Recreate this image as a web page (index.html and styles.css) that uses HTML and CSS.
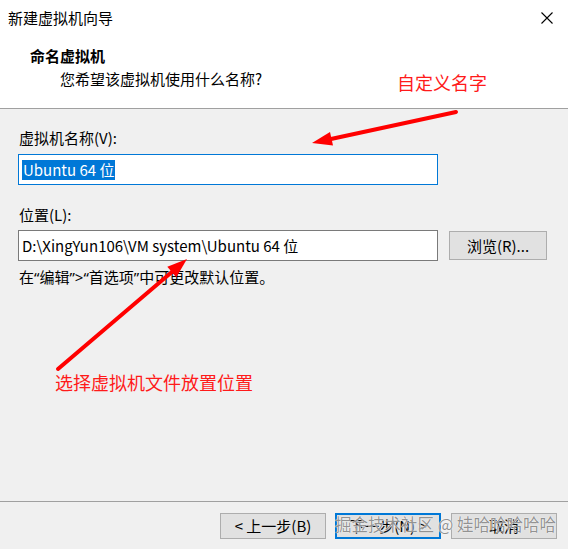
FILE: index.html
```html
<!DOCTYPE html>
<html lang="zh-CN">
<head>
<meta charset="utf-8">
<link rel="stylesheet" href="styles.css">
</head>
<body>
<div class="win">
  <header class="head">
    <div class="titlebar">
      <span class="title">新建虚拟机向导</span>
      <svg class="close" width="12" height="12" viewBox="0 0 12 12"><path d="M0.5 0.5 L11.5 11.5 M11.5 0.5 L0.5 11.5" stroke="#000" stroke-width="1.1" fill="none"/></svg>
    </div>
    <div class="heading">命名虚拟机</div>
    <div class="sub">您希望该虚拟机使用什么名称?</div>
  </header>
  <main class="body">
    <div class="lbl">虚拟机名称(V):</div>
    <div class="field focus"><span class="sel">Ubuntu 64 位</span></div>
    <div class="lbl lbl2">位置(L):</div>
    <div class="row">
      <div class="field">D:\XingYun106\VM system\Ubuntu 64 位</div>
      <button class="btn browse">浏览(R)...</button>
    </div>
    <p class="hint">在<span class="q">“</span>编辑<span class="q">”&gt;“</span>首选项<span class="q">”</span>中可更改默认位置。</p>
  </main>
  <footer class="foot">
    <button class="btn fbtn">&lt; 上一步(B)</button>
    <button class="btn fbtn primary">下一步(N) &gt;</button>
    <button class="btn fbtn cancel">取消</button>
  </footer>
  <svg class="arrows" width="568" height="549" viewBox="0 0 568 549">
    <line x1="456" y1="112" x2="331" y2="139" stroke="#ff0000" stroke-width="4" stroke-linecap="round"/>
    <polygon points="312,143 333,145.6 330,132" fill="#ff0000"/>
    <line x1="58" y1="369" x2="173" y2="271" stroke="#ff0000" stroke-width="4" stroke-linecap="round"/>
    <polygon points="187,259 176.3,277.3 167.3,266.7" fill="#ff0000"/>
  </svg>
  <span class="note note1">自定义名字</span>
  <span class="note note2">选择虚拟机文件放置位置</span>
  <span class="wm">掘金技术社区 @ 娃哈哈哈哈哈</span>
</div>
</body>
</html>
```

FILE: styles.css
```css
* { box-sizing: border-box; }
html, body { margin: 0; padding: 0; }
body {
  width: 568px;
  height: 549px;
  overflow: hidden;
  background: #f0f0f0;
  font-family: "Noto Sans CJK SC", "Noto Sans", sans-serif;
  font-size: 15px;
  color: #000;
}
.win {
  position: relative;
  width: 568px;
  height: 549px;
  display: flex;
  flex-direction: column;
}
.head {
  background: #fff;
  height: 109px;
  border-bottom: 1px solid #a0a0a0;
  flex: none;
}
.titlebar {
  height: 36px;
  display: flex;
  align-items: center;
  justify-content: space-between;
  padding: 0 15px 0 8px;
}
.title { line-height: 20px; }
.close { display: block; }
.heading {
  margin-top: 10px;
  padding-left: 30px;
  font-weight: bold;
  line-height: 20px;
}
.sub {
  margin-top: 3px;
  padding-left: 60px;
  line-height: 20px;
}
.body {
  flex: 1;
  padding: 19px 0 0 18px;
}
.lbl {
  line-height: 20px;
  padding-left: 1px;
}
.lbl2 { margin-top: 20px; }
.field {
  width: 420px;
  height: 31px;
  background: #fff;
  border: 1px solid #7a7a7a;
  display: flex;
  align-items: center;
  padding-left: 3px;
  line-height: 20px;
  white-space: nowrap;
}
.field.focus {
  margin-top: 6px;
  border-color: #0078d7;
}
.sel {
  background: #0078d7;
  color: #fff;
  line-height: 20px;
  padding: 0 1px;
}
.row {
  margin-top: 5px;
  display: flex;
  align-items: center;
  gap: 11px;
}
.btn {
  font-family: inherit;
  font-size: 15px;
  color: #000;
  background: #e1e1e1;
  border: 1px solid #adadad;
  padding: 0;
  line-height: 20px;
}
.browse {
  width: 98px;
  height: 29px;
}
.hint {
  margin: 6px 0 0 1px;
  line-height: 20px;
}
.q {
  font-family: "Noto Sans", "DejaVu Sans", sans-serif;
}
.foot {
  flex: none;
  height: 48px;
  border-top: 1px solid #a0a0a0;
  display: flex;
  align-items: flex-start;
  padding: 11px 0 0 220px;
}
.fbtn {
  width: 106px;
  height: 26px;
}
.primary {
  margin-left: 9px;
  border: 2px solid #0078d7;
}
.cancel { margin-left: 10px; }
.arrows {
  position: absolute;
  left: 0;
  top: 0;
  pointer-events: none;
}
.note {
  position: absolute;
  color: #ff1a1a;
  font-size: 18px;
  line-height: 24px;
  white-space: nowrap;
}
.note1 { left: 397px; top: 70px; }
.note2 { left: 55px; top: 370px; }
.wm {
  position: absolute;
  left: 335px;
  top: 513px;
  font-size: 16.5px;
  line-height: 22px;
  color: rgba(110, 110, 110, 0.75);
  text-shadow: 0 0 1px #fff, 0 0 1px #fff;
  white-space: nowrap;
  pointer-events: none;
}
```
